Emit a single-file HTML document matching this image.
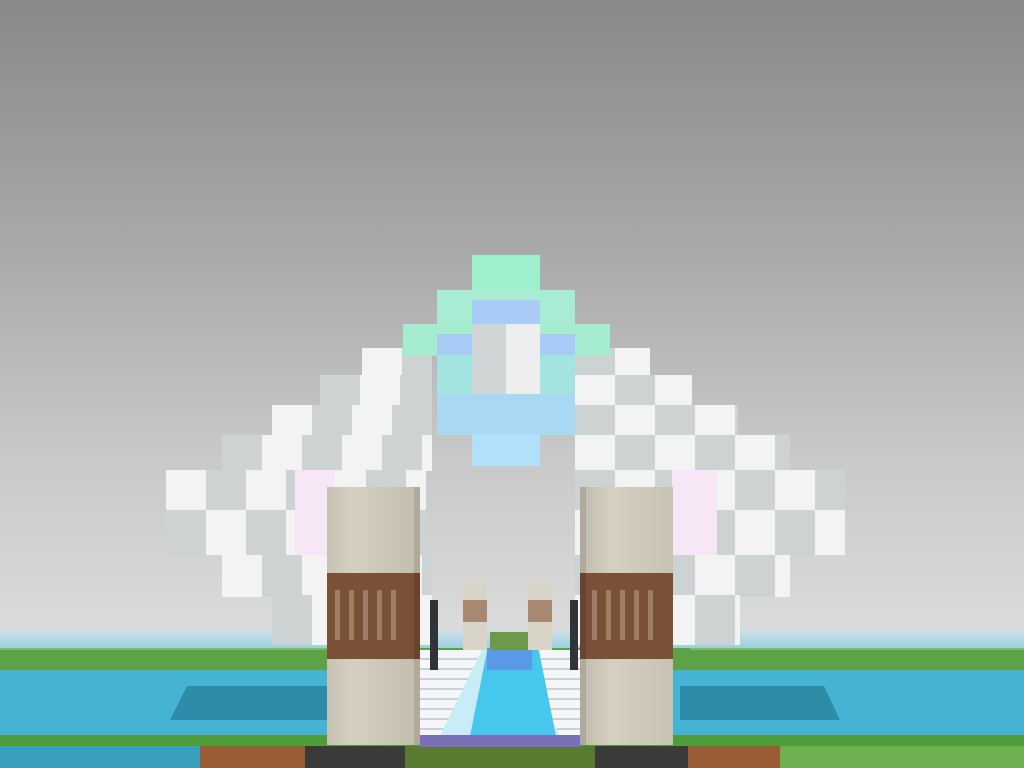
<!DOCTYPE html>
<html><head><meta charset="utf-8"><style>
body{margin:0;width:1024px;height:768px;overflow:hidden;position:relative;background:linear-gradient(#898989 0px,#a9a9a9 250px,#c8c8c8 450px,#dcdcdc 640px);font-family:"Liberation Sans",sans-serif}
div{position:absolute;box-sizing:border-box}
.w{background:repeating-linear-gradient(90deg,#f3f3f3 0 40px,#cdd3d3 40px 80px)}
.w2{background:repeating-linear-gradient(90deg,#cdd3d3 0 40px,#f3f3f3 40px 80px)}
</style></head><body>
<!-- hedge -->
<div style="left:0;top:648px;width:1024px;height:24px;background:#5ea246"></div>
<div style="left:0;top:644px;width:330px;height:6px;background:#7cc063"></div>
<div style="left:690px;top:644px;width:334px;height:6px;background:#7cc063"></div>
<div style="left:0;top:630px;width:1024px;height:18px;background:linear-gradient(#cfe0e6,#9ad0e2)"></div>
<!-- water -->
<div style="left:0;top:670px;width:1024px;height:66px;background:#45b4d4"></div>
<div style="left:170px;top:686px;width:170px;height:34px;background:#2f8ca8;clip-path:polygon(10% 0,100% 0,100% 100%,0 100%)"></div>
<div style="left:680px;top:686px;width:160px;height:34px;background:#2f8ca8;clip-path:polygon(0 0,90% 0,100% 100%,0 100%)"></div>
<div style="left:0;top:735px;width:1024px;height:12px;background:#4f9c3a"></div>
<div style="left:0;top:746px;width:210px;height:22px;background:#3a9fbd"></div>
<div style="left:200px;top:746px;width:120px;height:22px;background:#9a5c34"></div>
<div style="left:305px;top:746px;width:110px;height:22px;background:#3a3a38"></div>
<div style="left:405px;top:746px;width:195px;height:22px;background:#5a7a32"></div>
<div style="left:595px;top:746px;width:95px;height:22px;background:#3a3a38"></div>
<div style="left:688px;top:746px;width:112px;height:22px;background:#9a5c34"></div>
<div style="left:780px;top:746px;width:244px;height:22px;background:#6cb050"></div>
<!-- left wing -->
<div class="w" style="left:362px;top:348px;width:70px;height:28px"></div>
<div class="w2" style="left:320px;top:375px;width:112px;height:31px"></div>
<div class="w" style="left:272px;top:405px;width:160px;height:31px"></div>
<div class="w2" style="left:222px;top:435px;width:210px;height:36px"></div>
<div class="w" style="left:166px;top:470px;width:260px;height:42px"></div>
<div class="w2" style="left:166px;top:510px;width:260px;height:45px"></div>
<div class="w" style="left:222px;top:555px;width:210px;height:42px"></div>
<div class="w2" style="left:272px;top:595px;width:160px;height:50px"></div>
<div style="left:295px;top:470px;width:40px;height:85px;background:#f6e6f6"></div>
<!-- right wing -->
<div class="w2" style="left:575px;top:348px;width:75px;height:28px"></div>
<div class="w" style="left:575px;top:375px;width:117px;height:31px"></div>
<div class="w2" style="left:575px;top:405px;width:163px;height:31px"></div>
<div class="w" style="left:575px;top:435px;width:215px;height:36px"></div>
<div class="w2" style="left:575px;top:470px;width:270px;height:42px"></div>
<div class="w" style="left:575px;top:510px;width:270px;height:45px"></div>
<div class="w2" style="left:575px;top:555px;width:215px;height:42px"></div>
<div class="w" style="left:575px;top:595px;width:165px;height:50px"></div>
<div style="left:672px;top:470px;width:45px;height:85px;background:#f6e6f6"></div>
<!-- crystal -->
<div style="left:472px;top:255px;width:68px;height:40px;background:#9ef0cc"></div>
<div style="left:437px;top:290px;width:138px;height:36px;background:#a8ecd4"></div>
<div style="left:472px;top:300px;width:68px;height:26px;background:#a9ccf6"></div>
<div style="left:403px;top:324px;width:207px;height:32px;background:#a6ecd0"></div>
<div style="left:437px;top:334px;width:35px;height:22px;background:#a9ccf6"></div>
<div style="left:540px;top:334px;width:35px;height:22px;background:#a9ccf6"></div>
<div style="left:437px;top:355px;width:138px;height:80px;background:#a4e4e0"></div>
<div style="left:472px;top:324px;width:68px;height:70px;background:repeating-linear-gradient(90deg,#d0d6d6 0 34px,#eeeeee 34px 68px)"></div>
<div style="left:437px;top:394px;width:138px;height:40px;background:#a8d8f4"></div>
<div style="left:472px;top:434px;width:68px;height:32px;background:#b0e0fa"></div>
<!-- path -->
<div style="left:420px;top:650px;width:160px;height:86px;background:repeating-linear-gradient(#f4f6f8 0 8px,#c8d0d8 8px 10px)"></div>
<div style="left:440px;top:650px;width:120px;height:86px;background:#c8ecf8;clip-path:polygon(35% 0,65% 0,100% 100%,0 100%)"></div>
<div style="left:470px;top:650px;width:86px;height:86px;background:#46c8ee;clip-path:polygon(20% 0,80% 0,100% 100%,0 100%)"></div>
<div style="left:487px;top:648px;width:45px;height:22px;background:#5a98e8"></div>
<div style="left:490px;top:632px;width:40px;height:18px;background:#6a9a4a"></div>
<div style="left:420px;top:735px;width:160px;height:12px;background:#7870b8"></div>
<!-- small pillars -->
<div style="left:463px;top:583px;width:24px;height:67px;background:#d8d4c8"></div>
<div style="left:463px;top:600px;width:24px;height:22px;background:#a88870"></div>
<div style="left:528px;top:583px;width:24px;height:67px;background:#d8d4c8"></div>
<div style="left:528px;top:600px;width:24px;height:22px;background:#a88870"></div>
<div style="left:430px;top:600px;width:8px;height:70px;background:#303438"></div>
<div style="left:570px;top:600px;width:8px;height:70px;background:#303438"></div>
<!-- big pillars -->
<div style="left:327px;top:487px;width:93px;height:258px;background:linear-gradient(90deg,#c8c2b4,#d6d0c2 30%,#c4beb0);border-right:6px solid #b0aa9c"></div>
<div style="left:327px;top:573px;width:93px;height:86px;background:#7a5036;border-right:6px solid #684430"></div>
<div style="left:335px;top:590px;width:70px;height:50px;background:repeating-linear-gradient(90deg,#b89a84 0 5px,transparent 5px 14px);opacity:.6"></div>
<div style="left:580px;top:487px;width:93px;height:258px;background:linear-gradient(90deg,#c4beb0,#d6d0c2 30%,#c8c2b4);border-left:6px solid #b0aa9c"></div>
<div style="left:580px;top:573px;width:93px;height:86px;background:#7a5036;border-left:6px solid #684430"></div>
<div style="left:592px;top:590px;width:70px;height:50px;background:repeating-linear-gradient(90deg,#b89a84 0 5px,transparent 5px 14px);opacity:.6"></div>
</body></html>
